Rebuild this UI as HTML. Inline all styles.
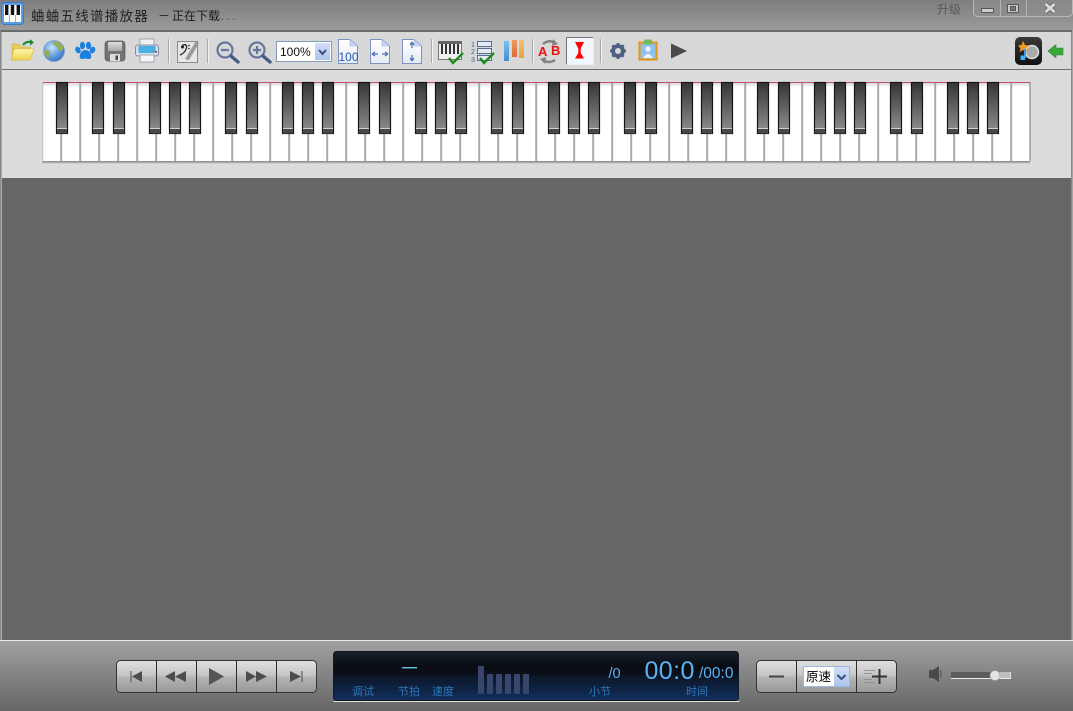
<!DOCTYPE html>
<html><head><meta charset="utf-8"><title>蛐蛐五线谱播放器</title>
<style>
html,body{margin:0;padding:0;width:1073px;height:711px;overflow:hidden;background:#666}
svg{display:block}
text{font-family:"Liberation Sans","Noto Sans CJK SC",sans-serif}
</style></head><body>
<svg xmlns="http://www.w3.org/2000/svg" width="1073" height="711" viewBox="0 0 1073 711">
<defs>
<linearGradient id="tb" x1="0" y1="0" x2="0" y2="1"><stop offset="0" stop-color="#7d7d7d"/><stop offset="1" stop-color="#9c9c9c"/></linearGradient>
<linearGradient id="bt" x1="0" y1="0" x2="0" y2="1"><stop offset="0" stop-color="#a0a0a0"/><stop offset="1" stop-color="#666"/></linearGradient>
<linearGradient id="btn" x1="0" y1="0" x2="0" y2="1"><stop offset="0" stop-color="#e0e0e0"/><stop offset=".48" stop-color="#c4c4c4"/><stop offset=".52" stop-color="#b4b4b4"/><stop offset="1" stop-color="#989898"/></linearGradient>
<linearGradient id="disp" x1="0" y1="0" x2="0" y2="1"><stop offset="0" stop-color="#18222e"/><stop offset=".3" stop-color="#0a0c12"/><stop offset=".48" stop-color="#0a0f1a"/><stop offset=".5" stop-color="#0c1526"/><stop offset="1" stop-color="#11305f"/></linearGradient>
<linearGradient id="blk" x1="0" y1="0" x2="0" y2="1"><stop offset="0" stop-color="#353535"/><stop offset="1" stop-color="#929292"/></linearGradient>
<linearGradient id="wt" x1="0" y1="0" x2="0" y2="1"><stop offset="0" stop-color="#d8d8d8"/><stop offset="1" stop-color="#fff"/></linearGradient>
<linearGradient id="sh" x1="0" y1="0" x2="0" y2="1"><stop offset="0" stop-color="#808080"/><stop offset="1" stop-color="#dcdcdc"/></linearGradient>
<linearGradient id="sel" x1="0" y1="0" x2="0" y2="1"><stop offset="0" stop-color="#d2def8"/><stop offset="1" stop-color="#aec4f0"/></linearGradient>
<linearGradient id="fold" x1="0" y1="0" x2="0" y2="1"><stop offset="0" stop-color="#fff6b0"/><stop offset="1" stop-color="#eed24c"/></linearGradient>
<linearGradient id="sav" x1="0" y1="0" x2="0" y2="1"><stop offset="0" stop-color="#dedede"/><stop offset="1" stop-color="#a8a8a8"/></linearGradient>
<linearGradient id="bar1" x1="0" y1="0" x2="0" y2="1"><stop offset="0" stop-color="#7cc0ee"/><stop offset="1" stop-color="#3c8ed4"/></linearGradient>
<linearGradient id="bar2" x1="0" y1="0" x2="0" y2="1"><stop offset="0" stop-color="#ee9a5e"/><stop offset="1" stop-color="#dc6a30"/></linearGradient>
<linearGradient id="bar3" x1="0" y1="0" x2="0" y2="1"><stop offset="0" stop-color="#f6c070"/><stop offset="1" stop-color="#eea03c"/></linearGradient>
<radialGradient id="gl" cx=".4" cy=".35" r=".7"><stop offset="0" stop-color="#c8e4fa"/><stop offset=".6" stop-color="#5f9ade"/><stop offset="1" stop-color="#3e70bb"/></radialGradient>
<linearGradient id="pg" x1="0" y1="0" x2="0" y2="1"><stop offset="0" stop-color="#fff"/><stop offset="1" stop-color="#e4ebf6"/></linearGradient>
<linearGradient id="ph" x1="0" y1="0" x2="0" y2="1"><stop offset="0" stop-color="#3a3a3a"/><stop offset="1" stop-color="#111"/></linearGradient>
<pattern id="keys" patternUnits="userSpaceOnUse" x="60" y="0" width="19" height="200"><rect x=".2" y="0" width="2" height="200" fill="#a8a8a8"/></pattern>
<g id="b"><rect x=".5" y=".5" width="11" height="51" fill="url(#blk)" stroke="#151515" stroke-width="1.200"/><rect x="1" y="46" width="10" height="1" fill="#cfcfcf"/><rect x="1" y="47" width="10" height="4.5" fill="#474747"/></g>
<g id="pgi"><path d="M.5 .5H12L19.5 7V24.5H.5Z" fill="url(#pg)" stroke="#7e93c4"/><path d="M12 .5V7H19.5Z" fill="#c9d8f2" stroke="#9cb0d8" stroke-width=".6"/></g>
</defs>

<!-- title bar -->
<rect width="1073" height="30" fill="url(#tb)"/>
<g transform="translate(1,2)">
<rect x=".5" y=".5" width="22" height="22" rx="3" fill="#5a9ee4" stroke="#3a7cc4"/>
<rect x="3" y="3" width="17" height="17" fill="#fff"/>
<rect x="4" y="3" width="3.400" height="10" fill="#111"/><rect x="9.800" y="3" width="3.400" height="10" fill="#111"/><rect x="15.600" y="3" width="3.400" height="10" fill="#111"/>
<path d="M8.500 13V20M14.500 13V20" stroke="#aaa"/>
</g>
<text x="31" y="21" font-size="13.5" fill="#222" letter-spacing="1.25">蛐蛐五线谱播放器</text>
<text x="158" y="20" font-size="12" fill="#222">－</text>
<text x="172" y="20" font-size="12" fill="#1c1c1c">正在下载</text>
<text x="221" y="20" font-size="11" fill="#444" letter-spacing="2.5">...</text>
<text x="937" y="13.500" font-size="12" fill="#5a5a5a">升级</text>
<path d="M973.500 0V12Q973.500 16.500 978 16.500H1067Q1072.500 16.500 1072.500 12V0" fill="#8f8f8f" fill-opacity=".6" stroke="#b8b8b8"/>
<path d="M1000.500 0V16M1026.500 0V16" stroke="#b4b4b4"/>
<rect x="981.500" y="8.500" width="12" height="4" rx="1" fill="#d0d0d0" stroke="#555"/>
<rect x="1007.500" y="4.500" width="11" height="8" fill="#c8c8c8" stroke="#555"/><rect x="1010.500" y="6.500" width="5" height="4" fill="#777" stroke="#555"/>
<path d="M1045.500 4L1054.500 12M1054.500 4L1045.500 12" stroke="#555" stroke-width="4.500"/>
<path d="M1045.500 4L1054.500 12M1054.500 4L1045.500 12" stroke="#d8d8d8" stroke-width="3"/>

<!-- toolbar -->
<rect x="0" y="30" width="1073" height="2" fill="#6a6a6a"/>
<rect x="0" y="32" width="1073" height="38" fill="#d8d8d8"/>
<rect x="0" y="69" width="1073" height="1" fill="#6e6e6e"/>
<!-- open -->
<path d="M12 60V44H19L21 47H30V60Z" fill="#e6cc58" stroke="#c8b040" stroke-width=".6"/>
<path d="M11 60L14 49H34L30 60Z" fill="url(#fold)" stroke="#d4b840" stroke-width=".6"/>
<path d="M23 45Q26 41 31 42" fill="none" stroke="#1f8a3a" stroke-width="2.200"/><path d="M30 39L34 42.500L30 45.500Z" fill="#1f8a3a"/>
<!-- globe -->
<circle cx="54" cy="51" r="10.500" fill="url(#gl)" stroke="#7f9fd0" stroke-width=".8"/>
<path d="M53 41Q60 41 63 46Q64 51 60 51Q57 48 56 46Q53 45 53 41ZM44 50Q48 49 50 52Q51 56 48 58Q44 55 44 50Z" fill="#93ad5a"/>
<!-- paw -->
<g fill="#1b80e0"><ellipse cx="78" cy="50" rx="2.600" ry="3.500" transform="rotate(-25 78 50)"/><ellipse cx="82.500" cy="45.500" rx="2.600" ry="3.800"/><ellipse cx="88.500" cy="45.500" rx="2.600" ry="3.800"/><ellipse cx="92.500" cy="50" rx="2.600" ry="3.500" transform="rotate(25 92.500 50)"/><path d="M85.500 50C90 50 92 55 91 58C89 60 87 58.500 85.500 58.500C84 58.500 81 60 80 58C79 55 81 50 85.500 50Z"/></g>
<!-- save -->
<rect x="105" y="41" width="20" height="20" rx="3" fill="#737373" stroke="#5a5a5a" stroke-width=".7"/>
<rect x="108" y="42" width="14" height="9" fill="url(#sav)"/><rect x="110" y="54" width="10" height="7" fill="#dcdcdc"/><rect x="115.500" y="55.500" width="2.500" height="4.500" fill="#444"/>
<!-- print -->
<rect x="140" y="39" width="14" height="7" fill="#f2f2f2" stroke="#8b99ad" stroke-width=".8"/>
<rect x="135.500" y="45" width="23" height="11" rx="2.500" fill="#d8dfe8" stroke="#7f8ea8"/>
<rect x="138.500" y="46" width="17" height="7" fill="#4bb0e0"/><rect x="155" y="51" width="2" height="1.500" fill="#c03030"/>
<rect x="140" y="55" width="14" height="7" fill="#f6f6f6" stroke="#8b99ad" stroke-width=".8"/>
<!-- separators -->
<g fill="#a8a8a8"><rect x="168" y="39" width="1" height="24"/><rect x="207" y="39" width="1" height="24"/><rect x="431" y="39" width="1" height="24"/><rect x="532" y="39" width="1" height="24"/><rect x="600" y="39" width="1" height="24"/></g>
<g fill="#f2f2f2"><rect x="169" y="39" width="1" height="24"/><rect x="208" y="39" width="1" height="24"/><rect x="432" y="39" width="1" height="24"/><rect x="533" y="39" width="1" height="24"/><rect x="601" y="39" width="1" height="24"/></g>
<!-- note edit -->
<rect x="177.500" y="41.500" width="20" height="21" fill="#e6e6e6" stroke="#8a8a8a"/>
<path d="M182 45.500Q187 43 186.500 48Q185 53 180 55" fill="none" stroke="#222" stroke-width="1.300"/><circle cx="182.500" cy="47" r="1.500" fill="#222"/><circle cx="189" cy="45.500" r=".8" fill="#222"/><circle cx="189" cy="48.500" r=".8" fill="#222"/>
<path d="M185 59L196 41L199 43L189 60Z" fill="#9a9a9a"/>
<!-- zoom -->
<g fill="none" stroke="#66779e" stroke-width="2.200"><circle cx="225" cy="50" r="7.500"/><circle cx="257" cy="50" r="7.500"/><path d="M221 50H229M253 50H261M257 46V54"/></g>
<path d="M231 56L238 62M263 56L270 62" stroke="#495a88" stroke-width="3.400" stroke-linecap="round"/>
<!-- zoom select -->
<rect x="276.500" y="41.500" width="55" height="20" fill="#fff" stroke="#7f9db9"/>
<rect x="315" y="43" width="15" height="17" fill="url(#sel)"/>
<path d="M319 50L322.500 54L326 50" fill="none" stroke="#3a4f7a" stroke-width="2"/>
<text x="280" y="56" font-size="12" fill="#111">100%</text>
<!-- pages -->
<use href="#pgi" x="338" y="39"/>
<text x="338.500" y="61" font-size="12" fill="#2a56a8">100</text>
<use href="#pgi" x="370" y="39"/>
<path d="M372 54H378M372 54L375 52M372 54L375 56M382 54H388M388 54L385 52M388 54L385 56" stroke="#4b6eb0" stroke-width="1.200" fill="none"/>
<use href="#pgi" x="402" y="39"/>
<path d="M412 42V48M412 42L410 45M412 42L414 45M412 55V61M412 61L410 58M412 61L414 58" stroke="#4b6eb0" stroke-width="1.200" fill="none"/>
<!-- keys check -->
<rect x="438.500" y="41.500" width="23" height="18" fill="#eeeeee" stroke="#777"/>
<rect x="438" y="41" width="24" height="3" fill="#666"/>
<g fill="#333"><rect x="441" y="44" width="2" height="10"/><rect x="445" y="44" width="2" height="10"/><rect x="449" y="44" width="2" height="10"/><rect x="453" y="44" width="2" height="10"/><rect x="457" y="44" width="2" height="10"/></g>
<path d="M449 58L453 63L463 53" fill="none" stroke="#1e8a1e" stroke-width="2.400"/>
<!-- list check -->
<g fill="#e4e9f2" stroke="#5a6c96"><rect x="477.500" y="41.500" width="14" height="5"/><rect x="477.500" y="48.500" width="14" height="5"/><rect x="477.500" y="55.500" width="14" height="5"/></g>
<text x="471" y="47" font-size="7" fill="#3f5a96">1</text><text x="471" y="54" font-size="7" fill="#3f5a96">2</text><text x="471" y="62" font-size="7" fill="#3f5a96">3</text>
<path d="M480 58L484 63L494 53" fill="none" stroke="#1e8a1e" stroke-width="2.400"/>
<!-- bars -->
<rect x="504" y="41" width="5" height="20" fill="url(#bar1)"/><rect x="512" y="40" width="5" height="17" fill="url(#bar2)"/><rect x="519" y="40" width="5" height="18" fill="url(#bar3)"/>
<!-- AB -->
<path d="M543 44Q549 39 555 43" fill="none" stroke="#808080" stroke-width="2.400"/><path d="M553 39L558 44L552 46Z" fill="#808080"/>
<path d="M555 60Q549 64 543 60" fill="none" stroke="#808080" stroke-width="2.400"/><path d="M545 64L540 59L546 57Z" fill="#808080"/>
<text x="538" y="56" font-size="13" font-weight="bold" fill="#ee1111">A</text>
<text x="551" y="55" font-size="13" font-weight="bold" fill="#ee1111">B</text>
<!-- red cursor box -->
<rect x="566.500" y="37.500" width="27" height="27" fill="#f2f7ff"/>
<path d="M566.500 64.500V37.500H593.500" fill="none" stroke="#777"/>
<path d="M593.500 37.500V64.500H566.500" fill="none" stroke="#eee"/>
<path d="M575 42H584L580.700 48.500V53L584 58.500H575L578.300 53V48.500Z" fill="#f00"/>
<!-- gear -->
<circle cx="618" cy="51" r="5.200" fill="none" stroke="#4f5f82" stroke-width="3.400"/>
<path d="M618 43V59M610 51H626M612.300 45.300L623.700 56.700M623.700 45.300L612.300 56.700" stroke="#4f5f82" stroke-width="2.600"/>
<circle cx="618" cy="51" r="3" fill="#d8d8d8"/>
<!-- clip -->
<rect x="639.500" y="42.500" width="17" height="17" fill="#8ec2ec" stroke="#e09a20" stroke-width="2.200"/>
<rect x="644" y="39.500" width="8" height="5" rx="1" fill="#6fb860"/>
<circle cx="648" cy="49" r="2.600" fill="#f0f4ff"/><path d="M643 58Q648 50 653 58Z" fill="#f0f4ff"/>
<!-- play -->
<path d="M671 43.500L687 51L671 58.500Z" fill="#4a4a4a"/>
<!-- photo -->
<rect x="1015" y="37" width="27" height="28" rx="5" fill="url(#ph)"/>
<circle cx="1032" cy="52" r="6.500" fill="#aaa" stroke="#ddd" stroke-width="1.500"/>
<path d="M1023 41L1025 45L1029 45.500L1026 48.500L1027 52L1023 50L1019.500 52L1020.500 48.500L1018 45.500L1021.500 45Z" fill="#f09a22"/>
<path d="M1025 49V58" stroke="#3a9aee" stroke-width="2"/><rect x="1020.500" y="55.500" width="4.500" height="4.500" fill="#3ab0ff"/>
<!-- green arrow -->
<path d="M1048 51L1056 44.500V48H1063V55H1056V58Z" fill="#3aa63a" stroke="#2a8a2a" stroke-width=".6"/>

<!-- keyboard panel -->
<rect x="0" y="70" width="1073" height="108" fill="#dcdcdc"/>
<rect x="42" y="82" width="988" height="79" fill="#fff"/>
<rect x="42" y="83" width="988" height="4" fill="url(#wt)"/>
<rect x="43" y="82" width="988" height="79" fill="url(#keys)"/>
<rect x="42" y="82" width="988" height="1" fill="#c4506e"/>
<rect x="42" y="161" width="988" height="3" fill="url(#sh)"/>
<rect x="42" y="82" width="1" height="80" fill="#c8c8c8"/>
<g>
<use href="#b" x="56" y="82"/>
<use href="#b" x="92" y="82"/><use href="#b" x="113" y="82"/><use href="#b" x="149" y="82"/><use href="#b" x="169" y="82"/><use href="#b" x="189" y="82"/>
<use href="#b" x="225" y="82"/><use href="#b" x="246" y="82"/><use href="#b" x="282" y="82"/><use href="#b" x="302" y="82"/><use href="#b" x="322" y="82"/>
<use href="#b" x="358" y="82"/><use href="#b" x="379" y="82"/><use href="#b" x="415" y="82"/><use href="#b" x="435" y="82"/><use href="#b" x="455" y="82"/>
<use href="#b" x="491" y="82"/><use href="#b" x="512" y="82"/><use href="#b" x="548" y="82"/><use href="#b" x="568" y="82"/><use href="#b" x="588" y="82"/>
<use href="#b" x="624" y="82"/><use href="#b" x="645" y="82"/><use href="#b" x="681" y="82"/><use href="#b" x="701" y="82"/><use href="#b" x="721" y="82"/>
<use href="#b" x="757" y="82"/><use href="#b" x="778" y="82"/><use href="#b" x="814" y="82"/><use href="#b" x="834" y="82"/><use href="#b" x="854" y="82"/>
<use href="#b" x="890" y="82"/><use href="#b" x="911" y="82"/><use href="#b" x="947" y="82"/><use href="#b" x="967" y="82"/><use href="#b" x="987" y="82"/>
</g>

<!-- main area -->
<rect x="0" y="178" width="1073" height="462" fill="#666"/>
<rect x="0" y="30" width="1" height="610" fill="#8a8a8a"/><rect x="1" y="32" width="1" height="608" fill="#a8a8a8"/>
<rect x="1071" y="32" width="1" height="608" fill="#8a8a8a"/><rect x="1072" y="30" width="1" height="610" fill="#a4a4a4"/>

<!-- bottom -->
<rect x="0" y="640" width="1073" height="1" fill="#e8e8e8"/>
<rect x="0" y="641" width="1073" height="70" fill="url(#bt)"/>

<!-- transport -->
<rect x="116.500" y="660.500" width="200" height="32" rx="4" fill="url(#btn)" stroke="#333"/>
<path d="M156.500 661V692M196.500 661V692M236.500 661V692M276.500 661V692" stroke="#2c2c2c"/>
<g fill="#4d4d4d">
<path d="M130.500 671H131.500V682H130.500ZM142 671V682L132 676.500Z"/>
<path d="M165 676.500L175 671V682ZM175 676.500L186 671V682Z"/>
<path d="M209 668L224 676.500L209 685Z" fill="#555"/>
<path d="M246 671L256 676.500L246 682ZM256 671L267 676.500L256 682Z"/>
<path d="M290 671L301 676.500L290 682ZM301.500 671H302.500V682H301.500Z"/>
</g>

<!-- display -->
<rect x="333.500" y="701" width="406" height="1" fill="#dedede"/>
<rect x="333.500" y="651.500" width="405" height="49" rx="3" fill="url(#disp)" stroke="#101622"/>
<rect x="402" y="667" width="15" height="1.400" fill="#6cbcf4"/>
<g fill="#37466a">
<rect x="478" y="666" width="6" height="28"/><rect x="487" y="674" width="6" height="20"/><rect x="496" y="674" width="6" height="20"/><rect x="505" y="674" width="6" height="20"/><rect x="514" y="674" width="6" height="20"/><rect x="523" y="674" width="6" height="20"/>
</g>
<g font-size="11" fill="#2e78b8">
<text x="352" y="695">调试</text><text x="398" y="695">节拍</text><text x="432" y="695">速度</text><text x="589" y="695">小节</text><text x="686" y="695">时间</text>
</g>
<text x="608.500" y="678" font-size="14.500" fill="#5cb2f0">/0</text>
<text x="644.500" y="679" font-size="25" fill="#5cb2f0" letter-spacing=".4">00:0</text>
<text x="699" y="678" font-size="15.500" fill="#5cb2f0">/00:0</text>

<!-- speed -->
<rect x="756.500" y="660.500" width="140" height="32" rx="4" fill="url(#btn)" stroke="#333"/>
<path d="M796.500 661V692M856.500 661V692" stroke="#2c2c2c"/>
<rect x="769" y="675.500" width="15" height="2" fill="#444"/>
<rect x="803.500" y="666.500" width="46" height="20" fill="#fff" stroke="#9db8e0"/>
<rect x="834" y="667" width="15" height="19" fill="url(#sel)"/>
<path d="M837.500 675L841.500 679L845.500 675" fill="none" stroke="#3a4f7a" stroke-width="2"/>
<text x="806" y="681" font-size="12.500" fill="#000">原速</text>
<rect x="872" y="675.500" width="15" height="2" fill="#333"/><rect x="878.500" y="669" width="2" height="15" fill="#333"/>
<path d="M864 670.500H875M864 673.500H872M864 679.500H872M864 682.500H875" stroke="#888" stroke-width=".8"/>

<!-- volume -->
<path d="M929 670H933L939 666V682L933 678H929Z" fill="#4a4a4a"/>
<path d="M940.500 670Q942 674 940.500 678" fill="none" stroke="#555"/>
<rect x="951" y="672" width="60" height="7" fill="#bebebe"/>
<rect x="951" y="672" width="44" height="6" fill="#5c5c5c"/>
<rect x="951" y="678" width="60" height="1" fill="#ececec"/>
<rect x="1010" y="672" width="1" height="7" fill="#e4e4e4"/>
<circle cx="995" cy="675.500" r="5" fill="#e4e4e4" stroke="#999" stroke-width=".6"/>
</svg>
</body></html>
